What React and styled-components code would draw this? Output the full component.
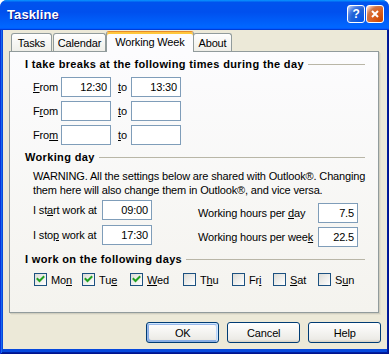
import React from "react";
import styled, { createGlobalStyle } from "styled-components";

const GlobalStyle = createGlobalStyle`
  html, body {
    margin: 0;
    padding: 0;
    background: #ffffff;
  }
  body {
    font-family: Tahoma, "Liberation Sans", Arial, sans-serif;
    font-size: 11px;
    letter-spacing: -0.15px;
    color: #000;
  }
  u {
    text-decoration: underline;
    text-underline-offset: 1px;
  }
`;

const Window = styled.div`
  width: 389px;
  height: 354px;
  display: flex;
  flex-direction: column;
  border-radius: 7px 7px 0 0;
  overflow: hidden;
  background: #0850e0;
`;

const TitleBar = styled.div`
  height: 30px;
  flex: none;
  display: flex;
  align-items: center;
  padding: 0 5px 0 7px;
  box-sizing: border-box;
  background: linear-gradient(
    180deg,
    #0997ff,
    #0053ee 8%,
    #0050ee 40%,
    #0066ff 88%,
    #0066ff 93%,
    #005bff 95%,
    #003dd7 96%,
    #003dd7
  );
`;

const Title = styled.div`
  flex: 1;
  color: #fff;
  font-weight: bold;
  font-size: 13px;
  letter-spacing: 0.1px;
  text-shadow: 1px 1px #0f1089;
  padding-bottom: 2px;
`;

const TitleButton = styled.div`
  width: 16px;
  height: 16px;
  margin-left: 1px;
  margin-bottom: 2px;
  border: 1px solid #fff;
  border-radius: 3px;
  display: flex;
  align-items: center;
  justify-content: center;
  color: #fff;
  font-weight: bold;
  font-size: 12px;
  background: ${(p) =>
    p.$close
      ? "radial-gradient(circle at 90% 90%, #cc4600 0, #dc6527 55%, #cd7546 70%, #ffccb2 90%, #fff 100%)"
      : "radial-gradient(circle at 90% 90%, #0054e9 0, #2263d5 55%, #4479e4 70%, #a3bbec 90%, #fff 100%)"};
`;

const Frame = styled.div`
  flex: 1;
  display: flex;
  padding: 0 4px 5px 3px;
  box-shadow: inset 1px 0 #0831d9, inset -1px -1px #00138c, inset 2px 0 #166aee,
    inset -2px -2px #001ea0;
  background: #0648dc;
`;

const Client = styled.div`
  flex: 1;
  display: flex;
  flex-direction: column;
  background: #ece9d8;
  padding: 1px 6px 0 6px;
`;

const TabStrip = styled.div`
  display: flex;
  align-items: flex-end;
  height: 21px;
  padding-left: 2px;
  position: relative;
  z-index: 1;
`;

const Tab = styled.div`
  width: ${(p) => p.$w}px;
  box-sizing: border-box;
  text-align: center;
  margin-right: ${(p) => (p.$active ? 0 : 1)}px;
  border: 1px solid #919b9c;
  border-bottom: none;
  border-radius: 3px 3px 0 0;
  ${(p) =>
    p.$active
      ? `
    height: 21px;
    line-height: 19px;
    background: #fcfcfe;
    border-top: 1px solid #e68b2c;
    box-shadow: inset 0 2px #ffc73c;
    padding-top: 1px;
    margin-left: -1px;
    margin-right: -1px;
    position: relative;
    z-index: 2;
  `
      : `
    height: 18px;
    line-height: 18px;
    margin-bottom: 1px;
    background: linear-gradient(180deg, #fff, #fafaf9 26%, #f0f0ea 95%, #ecebe6);
  `}
`;

const Panel = styled.div`
  margin-top: -1px;
  height: 262px;
  box-sizing: border-box;
  border: 1px solid #919b9c;
  background: linear-gradient(180deg, #fcfcfe, #f4f3ee);
  box-shadow: 1px 1px #d0cebf, 2px 2px #e3e0d0;
  padding: 5px 13px 0 15px;
  display: flex;
  flex-direction: column;
  margin-right: 2px;
`;

const GroupTitle = styled.div`
  display: flex;
  align-items: center;
  gap: 4px;
  height: 14px;
  font-weight: bold;
  font-size: 11px;
  letter-spacing: 0.35px;
  white-space: nowrap;
  margin-top: ${(p) => p.$mt || 0}px;

  &::after {
    content: "";
    flex: 1;
    height: 1px;
    background: #b9b6a7;
    margin-top: 1px;
  }
`;

const Group = styled.div`
  display: flex;
  flex-direction: column;
  gap: ${(p) => p.$gap || 0}px;
  padding-left: 8px;
  margin-top: ${(p) => p.$mt || 0}px;
`;

const Row = styled.div`
  display: flex;
  align-items: center;
  height: 20px;
`;

const Label = styled.div`
  width: ${(p) => p.$w}px;
  flex: none;
  white-space: nowrap;
`;

const ToLabel = styled(Label)`
  box-sizing: border-box;
  padding-left: 7px;
`;

const Field = styled.div`
  width: ${(p) => p.$w}px;
  height: 20px;
  flex: none;
  box-sizing: border-box;
  border: 1px solid #7f9db9;
  background: #fff;
  text-align: right;
  padding-right: 3px;
  line-height: 18px;
  font-size: 11px;
`;

const Warning = styled.div`
  line-height: 14px;
  margin: 5px 0 3px;
  padding-left: 8px;
  white-space: nowrap;
`;

const Columns = styled.div`
  display: flex;
  padding-left: 8px;
`;

const Column = styled.div`
  display: flex;
  flex-direction: column;
  gap: ${(p) => p.$gap}px;
  padding-top: ${(p) => p.$pt || 0}px;
  width: ${(p) => p.$w}px;
`;

const Days = styled.div`
  display: flex;
  align-items: center;
  padding-left: 9px;
  margin-top: 7px;
  height: 13px;
`;

const Day = styled.div`
  width: ${(p) => p.$w}px;
  display: flex;
  align-items: center;
  gap: 4px;
  flex: none;
`;

const Box = styled.div`
  width: 13px;
  height: 13px;
  box-sizing: border-box;
  border: 1px solid #1c5180;
  background: linear-gradient(135deg, #dcdcd7, #fff);
  display: flex;
  align-items: center;
  justify-content: center;
`;

const ButtonRow = styled.div`
  display: flex;
  justify-content: flex-end;
  gap: 8px;
  margin-top: 9px;
`;

const Button = styled.div`
  width: 73px;
  height: 21px;
  box-sizing: border-box;
  border: 1px solid #003c74;
  border-radius: 3px;
  background: linear-gradient(180deg, #fff, #ecebe6 86%, #d6d0c5);
  display: flex;
  align-items: center;
  justify-content: center;
  ${(p) =>
    p.$default &&
    `box-shadow: inset -1px 1px #cee7ff, inset 1px 2px #98b8ea, inset -2px 2px #bcd4f6, inset 1px -1px #89ade4, inset 2px -2px #89ade4;`}
`;

const Check = () => (
  <svg width="9" height="9" viewBox="0 0 9 9">
    <polyline
      points="1.5,4 3.5,6 7.5,2"
      fill="none"
      stroke="#21a121"
      strokeWidth="2"
      strokeLinecap="square"
    />
  </svg>
);

const days = [
  { pre: "Mo", key: "n", post: "", w: 48, on: true },
  { pre: "Tu", key: "e", post: "", w: 48, on: true },
  { pre: "", key: "W", post: "ed", w: 53, on: true },
  { pre: "T", key: "h", post: "u", w: 49 },
  { pre: "Fr", key: "i", post: "", w: 41 },
  { pre: "", key: "S", post: "at", w: 45 },
  { pre: "S", key: "u", post: "n", w: 40 },
];

const breaks = [
  { from: "12:30", to: "13:30", label: <><u>F</u>rom</> },
  { from: "", to: "", label: <>F<u>r</u>om</> },
  { from: "", to: "", label: <>Fro<u>m</u></> },
];

export default function App() {
  return (
    <>
      <GlobalStyle />
      <Window>
        <TitleBar>
          <Title>Taskline</Title>
          <TitleButton>?</TitleButton>
          <TitleButton $close>
            <svg width="10" height="10" viewBox="0 0 10 10">
              <path d="M2 2 L8 8 M8 2 L2 8" stroke="#fff" strokeWidth="2" />
            </svg>
          </TitleButton>
        </TitleBar>
        <Frame>
          <Client>
            <TabStrip>
              <Tab $w={41}>Tasks</Tab>
              <Tab $w={53}>Calendar</Tab>
              <Tab $w={88} $active>Working Week</Tab>
              <Tab $w={39}>About</Tab>
            </TabStrip>
            <Panel>
              <GroupTitle>I take breaks at the following times during the day</GroupTitle>
              <Group $gap={4} $mt={6}>
                {breaks.map((b, i) => (
                  <Row key={i}>
                    <Label $w={28}>{b.label}</Label>
                    <Field $w={50}>{b.from}</Field>
                    <ToLabel $w={20}>
                      <u>t</u>o
                    </ToLabel>
                    <Field $w={50}>{b.to}</Field>
                  </Row>
                ))}
              </Group>

              <GroupTitle $mt={5}>Working day</GroupTitle>
              <Warning>
                WARNING. All the settings below are shared with Outlook®. Changing
                <br />
                them here will also change them in Outlook®, and vice versa.
              </Warning>
              <Columns>
                <Column $gap={5} $w={165}>
                  <Row>
                    <Label $w={69}>
                      I st<u>a</u>rt work at
                    </Label>
                    <Field $w={50}>09:00</Field>
                  </Row>
                  <Row>
                    <Label $w={69}>
                      I sto<u>p</u> work at
                    </Label>
                    <Field $w={50}>17:30</Field>
                  </Row>
                </Column>
                <Column $gap={4} $pt={3} $w={160}>
                  <Row>
                    <Label $w={120}>
                      Working hours per <u>d</u>ay
                    </Label>
                    <Field $w={40}>7.5</Field>
                  </Row>
                  <Row>
                    <Label $w={120}>
                      Working hours per wee<u>k</u>
                    </Label>
                    <Field $w={40}>22.5</Field>
                  </Row>
                </Column>
              </Columns>

              <GroupTitle $mt={5}>I work on the following days</GroupTitle>
              <Days>
                {days.map((d, i) => (
                  <Day key={i} $w={d.w}>
                    <Box>{d.on && <Check />}</Box>
                    <span>
                      {d.pre}
                      <u>{d.key}</u>
                      {d.post}
                    </span>
                  </Day>
                ))}
              </Days>
            </Panel>
            <ButtonRow>
              <Button $default>OK</Button>
              <Button>Cancel</Button>
              <Button>Help</Button>
            </ButtonRow>
          </Client>
        </Frame>
      </Window>
    </>
  );
}
